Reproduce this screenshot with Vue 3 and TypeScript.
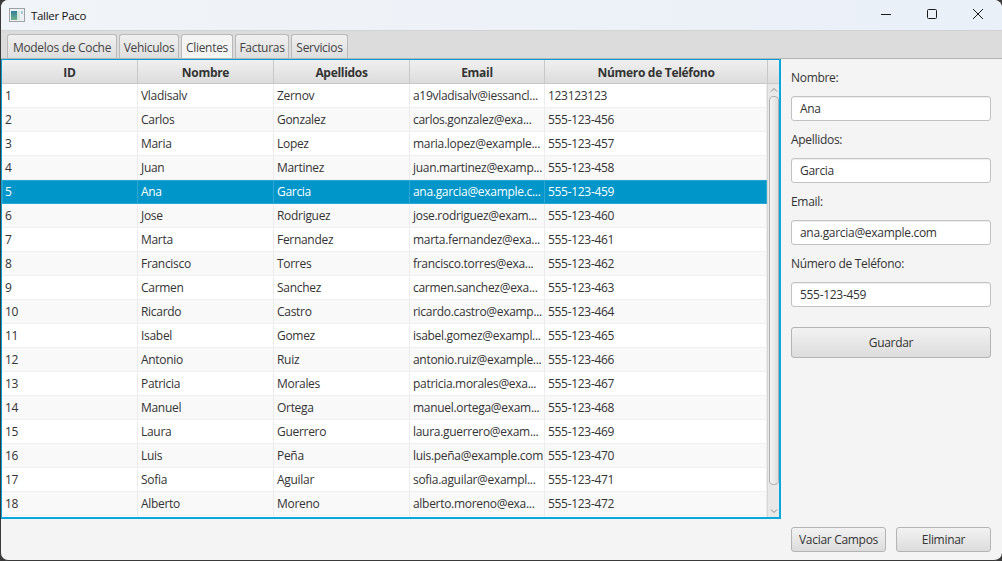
<script setup lang="ts">
interface Cliente {
  id: number
  nombre: string
  apellidos: string
  email: string
  telefono: string
}

const tabs = ['Modelos de Coche', 'Vehiculos', 'Clientes', 'Facturas', 'Servicios']
const columnas = ['ID', 'Nombre', 'Apellidos', 'Email', 'Número de Teléfono']

const clientes: Cliente[] = [
  { id: 1, nombre: 'Vladisalv', apellidos: 'Zernov', email: 'a19vladisalv@iessancl...', telefono: '123123123' },
  { id: 2, nombre: 'Carlos', apellidos: 'Gonzalez', email: 'carlos.gonzalez@exa...', telefono: '555-123-456' },
  { id: 3, nombre: 'Maria', apellidos: 'Lopez', email: 'maria.lopez@example...', telefono: '555-123-457' },
  { id: 4, nombre: 'Juan', apellidos: 'Martinez', email: 'juan.martinez@examp...', telefono: '555-123-458' },
  { id: 5, nombre: 'Ana', apellidos: 'Garcia', email: 'ana.garcia@example.c...', telefono: '555-123-459' },
  { id: 6, nombre: 'Jose', apellidos: 'Rodriguez', email: 'jose.rodriguez@exam...', telefono: '555-123-460' },
  { id: 7, nombre: 'Marta', apellidos: 'Fernandez', email: 'marta.fernandez@exa...', telefono: '555-123-461' },
  { id: 8, nombre: 'Francisco', apellidos: 'Torres', email: 'francisco.torres@exa...', telefono: '555-123-462' },
  { id: 9, nombre: 'Carmen', apellidos: 'Sanchez', email: 'carmen.sanchez@exa...', telefono: '555-123-463' },
  { id: 10, nombre: 'Ricardo', apellidos: 'Castro', email: 'ricardo.castro@examp...', telefono: '555-123-464' },
  { id: 11, nombre: 'Isabel', apellidos: 'Gomez', email: 'isabel.gomez@exampl...', telefono: '555-123-465' },
  { id: 12, nombre: 'Antonio', apellidos: 'Ruiz', email: 'antonio.ruiz@example...', telefono: '555-123-466' },
  { id: 13, nombre: 'Patricia', apellidos: 'Morales', email: 'patricia.morales@exa...', telefono: '555-123-467' },
  { id: 14, nombre: 'Manuel', apellidos: 'Ortega', email: 'manuel.ortega@exam...', telefono: '555-123-468' },
  { id: 15, nombre: 'Laura', apellidos: 'Guerrero', email: 'laura.guerrero@exam...', telefono: '555-123-469' },
  { id: 16, nombre: 'Luis', apellidos: 'Peña', email: 'luis.peña@example.com', telefono: '555-123-470' },
  { id: 17, nombre: 'Sofia', apellidos: 'Aguilar', email: 'sofia.aguilar@exampl...', telefono: '555-123-471' },
  { id: 18, nombre: 'Alberto', apellidos: 'Moreno', email: 'alberto.moreno@exa...', telefono: '555-123-472' }
]

const seleccionado = 5

const campos = [
  { label: 'Nombre:', value: 'Ana' },
  { label: 'Apellidos:', value: 'Garcia' },
  { label: 'Email:', value: 'ana.garcia@example.com' },
  { label: 'Número de Teléfono:', value: '555-123-459' }
]
</script>

<template>
  <div class="window">
    <header class="titlebar">
      <svg class="app-icon" width="16" height="16" viewBox="0 0 16 16">
        <defs>
          <linearGradient id="pane" x1="0" y1="0" x2="0" y2="1">
            <stop offset="0" stop-color="#2f7f9c" />
            <stop offset="1" stop-color="#6fb08a" />
          </linearGradient>
        </defs>
        <rect x="0.5" y="1.5" width="15" height="13" fill="#eef1f3" stroke="#9ea3a8" />
        <rect x="2" y="4" width="6" height="9" fill="url(#pane)" />
        <rect x="8" y="4" width="3" height="9" fill="#d5e6dc" />
        <rect x="12" y="4" width="2" height="3" fill="#a9c9d6" />
      </svg>
      <span class="title">Taller Paco</span>
      <div class="controls">
        <svg width="46" height="30" viewBox="0 0 46 30"><path d="M18 14.5h10" stroke="#1a1a1a" fill="none" /></svg>
        <svg width="46" height="30" viewBox="0 0 46 30"><rect x="18.5" y="9.5" width="9" height="9" rx="1" stroke="#1a1a1a" fill="none" /></svg>
        <svg width="46" height="30" viewBox="0 0 46 30"><path d="M18 9l10 10M28 9L18 19" stroke="#1a1a1a" fill="none" /></svg>
      </div>
    </header>

    <nav class="tabs">
      <div v-for="tab in tabs" :key="tab" class="tab" :class="{ active: tab === 'Clientes' }">{{ tab }}</div>
    </nav>

    <main class="content">
      <section class="table">
        <div class="thead">
          <div v-for="col in columnas" :key="col" class="th">{{ col }}</div>
          <div class="th corner"></div>
        </div>
        <div class="tbody">
          <div class="rows">
            <div
              v-for="c in clientes"
              :key="c.id"
              class="row"
              :class="{ odd: c.id % 2 === 0, selected: c.id === seleccionado }"
            >
              <div class="td">{{ c.id }}</div>
              <div class="td">{{ c.nombre }}</div>
              <div class="td">{{ c.apellidos }}</div>
              <div class="td">{{ c.email }}</div>
              <div class="td">{{ c.telefono }}</div>
            </div>
            <div class="row filler">
              <div class="td"></div>
              <div class="td"></div>
              <div class="td"></div>
              <div class="td"></div>
              <div class="td"></div>
            </div>
          </div>
          <div class="scrollbar">
            <svg width="12" height="12" viewBox="0 0 12 12"><path d="M3 7.5l3-3 3 3" stroke="#8b8b8b" fill="none" /></svg>
            <div class="track"><div class="thumb"></div></div>
            <svg width="12" height="12" viewBox="0 0 12 12"><path d="M3 4.5l3 3 3-3" stroke="#8b8b8b" fill="none" /></svg>
          </div>
        </div>
      </section>

      <aside class="side">
        <div class="form">
          <template v-for="campo in campos" :key="campo.label">
            <label class="label">{{ campo.label }}</label>
            <div class="input">{{ campo.value }}</div>
          </template>
          <button class="btn guardar">Guardar</button>
        </div>
      </aside>
    </main>

    <footer class="actions">
      <button class="btn small">Vaciar Campos</button>
      <button class="btn small">Eliminar</button>
    </footer>
  </div>
</template>

<style scoped>
.window {
  width: 1002px;
  height: 561px;
  box-sizing: border-box;
  display: flex;
  flex-direction: column;
  background: #f4f4f4;
  border-left: 1px solid #3a3a3a;
  border-bottom: 1px solid #3a3a3a;
  border-radius: 8px;
  overflow: hidden;
  font-family: "Open Sans", "Noto Sans", sans-serif;
  font-size: 12px;
  letter-spacing: -0.3px;
  color: #333;
}
.titlebar {
  height: 30px;
  flex: none;
  display: flex;
  align-items: center;
  padding-left: 8px;
  background: linear-gradient(90deg, #f1f4f8, #eaf0f8);
  color: #111;
}
.app-icon {
  margin-right: 6px;
}
.title {
  font-size: 11.5px;
}
.controls {
  margin-left: auto;
  display: flex;
  margin-right: 1px;
}
.controls svg {
  display: block;
}
.tabs {
  height: 29px;
  flex: none;
  box-sizing: border-box;
  display: grid;
  grid-template-columns: 110px 60px 52px 54px 57px;
  align-items: end;
  gap: 2px;
  padding-left: 6px;
  background: #dcdcdc;
  border-top: 1px solid #d2d2d2;
  border-bottom: 1px solid #b5b5b5;
}
.tab {
  height: 24px;
  box-sizing: border-box;
  padding-top: 4px;
  text-align: center;
  border: 1px solid #b9b9b9;
  border-bottom: none;
  border-radius: 3px 3px 0 0;
  background: linear-gradient(#f0f0f0, #dedede);
  color: #444;
  white-space: nowrap;
}
.tab.active {
  background: #f4f4f4;
}
.content {
  flex: 1;
  display: flex;
  min-height: 0;
}
.table {
  width: 780px;
  height: 460px;
  flex: none;
  box-sizing: border-box;
  border: 1px solid #039ed3;
  border-right: 2px solid #0aa6de;
  border-bottom: 2px solid #0aa6de;
  display: flex;
  flex-direction: column;
  overflow: hidden;
  background: #fff;
}
.thead {
  height: 24px;
  flex: none;
  display: grid;
  grid-template-columns: 136px 136px 136px 135px 223px 1fr;
  background: linear-gradient(#f0f0f0, #dcdcdc);
  border-bottom: 1px solid #c8c8c8;
  box-sizing: border-box;
}
.th {
  border-right: 1px solid #c8c8c8;
  text-align: center;
  font-weight: 700;
  line-height: 25px;
  box-sizing: border-box;
  color: #333;
}
.corner {
  border-right: none;
}
.tbody {
  flex: 1;
  display: flex;
  min-height: 0;
}
.rows {
  width: 765px;
  flex: none;
  overflow: hidden;
}
.row {
  height: 24px;
  display: grid;
  grid-template-columns: 136px 136px 136px 135px 222px;
  box-sizing: border-box;
  background: #fff;
  border-bottom: 1px solid #f0f0f0;
}
.row.odd {
  background: #f9f9f9;
}
.td {
  border-right: 1px solid #ececec;
  padding-left: 3px;
  line-height: 23px;
  white-space: nowrap;
  overflow: hidden;
  box-sizing: border-box;
}
.row.selected {
  background: #0096c9;
  color: #fff;
  border-bottom: none;
  box-shadow: inset 0 0 0 1px #2aa7d4;
}
.row.selected .td {
  border-right-color: #2aa7d4;
}
.scrollbar {
  flex: 1;
  display: flex;
  flex-direction: column;
  background: #e8e8e8;
  border-left: 1px solid #d6d6d6;
}
.scrollbar svg {
  flex: none;
  display: block;
}
.track {
  flex: 1;
  padding: 0 1px;
}
.thumb {
  height: 389px;
  border: 1px solid #b0b0b0;
  border-radius: 4px;
  background: linear-gradient(90deg, #f4f4f4, #dfdfdf);
  box-sizing: border-box;
}
.side {
  flex: 1;
  padding: 10px 11px 10px 10px;
}
.form {
  display: flex;
  flex-direction: column;
}
.label {
  height: 17px;
  line-height: 17px;
  margin-bottom: 10px;
  color: #333;
}
.input {
  height: 25px;
  box-sizing: border-box;
  padding-left: 8px;
  line-height: 23px;
  background: #fff;
  border: 1px solid #c2c2c2;
  border-radius: 3px;
  margin-bottom: 10px;
  box-shadow: inset 0 1px 1px #eee;
}
.btn {
  font: inherit;
  letter-spacing: inherit;
  color: #333;
  border: 1px solid #b4b4b4;
  border-radius: 3px;
  background: linear-gradient(#f2f2f2, #dcdcdc);
  padding: 0;
}
.guardar {
  height: 31px;
  margin-top: 10px;
}
.actions {
  flex: none;
  display: flex;
  justify-content: flex-end;
  gap: 10px;
  padding: 0 11px 8px 0;
}
.small {
  width: 95px;
  height: 25px;
}
</style>

<style>
html,
body {
  margin: 0;
  background: #3a3a3a;
}
</style>
